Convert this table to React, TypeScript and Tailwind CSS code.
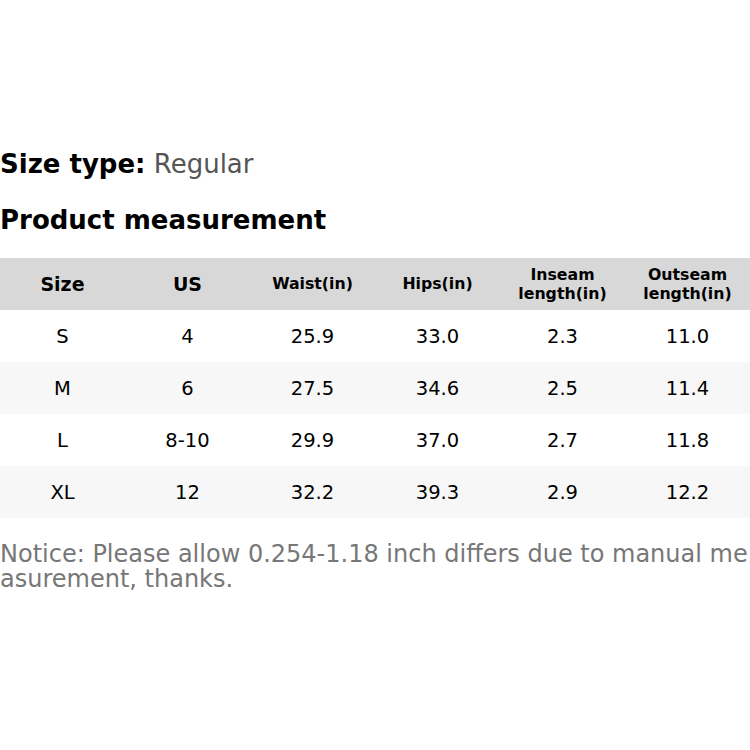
const rows = [
  ["S", "4", "25.9", "33.0", "2.3", "11.0"],
  ["M", "6", "27.5", "34.6", "2.5", "11.4"],
  ["L", "8-10", "29.9", "37.0", "2.7", "11.8"],
  ["XL", "12", "32.2", "39.3", "2.9", "12.2"],
];

export default function App() {
  return (
    <div className="h-[750px] w-[750px] bg-white font-['DejaVu_Sans',sans-serif] text-black">
      <div className="pt-[147px]">
        <p className="text-[26px] leading-[34px]">
          <span className="font-bold">Size type:</span>{" "}
          <span className="text-[#555]">Regular</span>
        </p>
        <h2 className="mt-[22px] text-[26px] font-bold leading-[34px]">Product measurement</h2>
      </div>

      <table className="mt-[21px] w-full table-fixed border-collapse">
        <thead>
          <tr className="h-[52px] bg-[#d8d8d8]">
            <th className="text-[19px] font-bold">Size</th>
            <th className="text-[19px] font-bold">US</th>
            <th className="text-[15.75px] font-bold">Waist(in)</th>
            <th className="text-[15.75px] font-bold">Hips(in)</th>
            <th className="text-[15.75px] font-bold leading-[19px]">
              Inseam
              <br />
              length(in)
            </th>
            <th className="text-[15.75px] font-bold leading-[19px]">
              Outseam
              <br />
              length(in)
            </th>
          </tr>
        </thead>
        <tbody>
          {rows.map((row, i) => (
            <tr key={row[0]} className={i % 2 === 0 ? "h-[52px] bg-white" : "h-[52px] bg-[#f7f7f7]"}>
              {row.map((cell, j) => (
                <td key={j} className="pt-[2px] text-center text-[19.5px]">
                  {cell}
                </td>
              ))}
            </tr>
          ))}
        </tbody>
      </table>

      <p className="mt-[24px] break-all text-[24px] leading-[25px] text-[#777]">
        Notice: Please allow 0.254-1.18 inch differs due to manual measurement, thanks.
      </p>
    </div>
  );
}
